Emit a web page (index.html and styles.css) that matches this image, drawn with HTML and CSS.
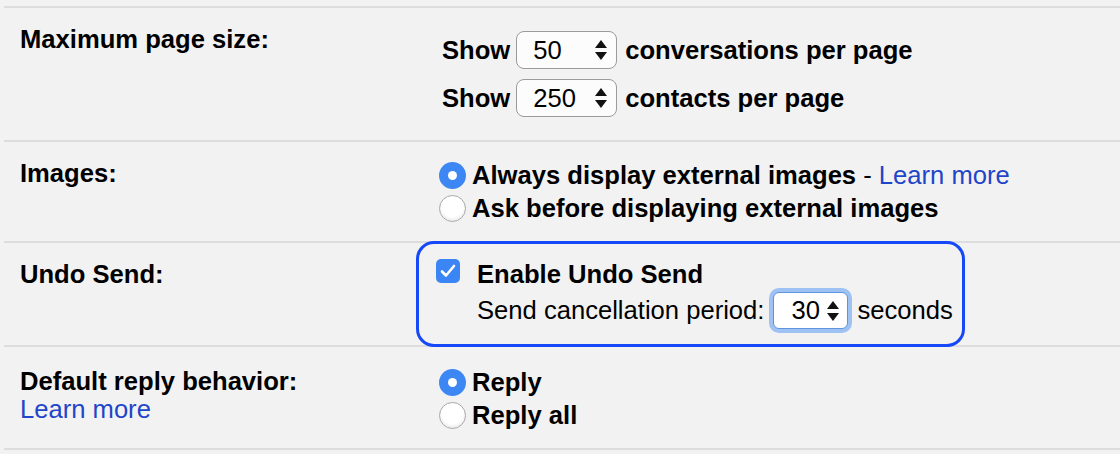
FILE: index.html
```html
<!DOCTYPE html>
<html lang="en">
<head>
    <meta charset="UTF-8">
    <title>Settings</title>
    <link rel="stylesheet" href="styles.css">
</head>
<body>
    <div class="settings">
        <div class="row row-pages">
            <div class="label">Maximum page size:</div>
            <div class="value">
                <div class="line">
                    <span>Show</span>
                    <span class="select"><span>50</span>
                        <svg class="arrows" width="12" height="20" viewBox="0 0 12 20"><path d="M0 8 L6 0 L12 8 Z M0 12 L6 20 L12 12 Z"/></svg>
                    </span>
                    <span>conversations per page</span>
                </div>
                <div class="line">
                    <span>Show</span>
                    <span class="select"><span>250</span>
                        <svg class="arrows" width="12" height="20" viewBox="0 0 12 20"><path d="M0 8 L6 0 L12 8 Z M0 12 L6 20 L12 12 Z"/></svg>
                    </span>
                    <span>contacts per page</span>
                </div>
            </div>
        </div>

        <div class="row row-radios">
            <div class="label">Images:</div>
            <div class="value">
                <div class="option">
                    <span class="radio checked"></span>
                    <span>Always display external images</span><span class="normal">&nbsp;- <a href="#">Learn more</a></span>
                </div>
                <div class="option">
                    <span class="radio"></span>
                    <span>Ask before displaying external images</span>
                </div>
            </div>
        </div>

        <div class="row row-undo">
            <div class="label">Undo Send:</div>
            <div class="value">
                <div class="highlight">
                    <div class="check-line">
                        <span class="checkbox">
                            <svg width="16" height="14" viewBox="0 0 16 14"><path d="M2 7.5 L6 11.5 L14 2" fill="none" stroke="#fff" stroke-width="2.6" stroke-linecap="round" stroke-linejoin="round"/></svg>
                        </span>
                        <span>Enable Undo Send</span>
                    </div>
                    <div class="period-line">
                        <span>Send cancellation period:</span>
                        <span class="select focused"><span>30</span>
                            <svg class="arrows" width="12" height="20" viewBox="0 0 12 20"><path d="M0 8 L6 0 L12 8 Z M0 12 L6 20 L12 12 Z"/></svg>
                        </span>
                        <span>seconds</span>
                    </div>
                </div>
            </div>
        </div>

        <div class="row row-radios row-reply">
            <div class="label">Default reply behavior:<br><a href="#" class="normal">Learn more</a></div>
            <div class="value">
                <div class="option">
                    <span class="radio checked"></span>
                    <span>Reply</span>
                </div>
                <div class="option">
                    <span class="radio"></span>
                    <span>Reply all</span>
                </div>
            </div>
        </div>
    </div>
</body>
</html>
```

FILE: styles.css
```css
* {
    margin: 0;
    padding: 0;
    box-sizing: border-box;
}

body {
    background-color: #f2f2f2;
    font-family: "Liberation Sans", Arial, sans-serif;
    font-size: 25.6px;
    font-weight: bold;
    color: #000;
    overflow: hidden;
}

a {
    color: #1f45c8;
    text-decoration: none;
    font-weight: normal;
}

.normal {
    font-weight: normal;
}

.settings {
    margin: 6px 0 0 4px;
    border-top: 2px solid #dddddd;
}

.row {
    display: grid;
    grid-template-columns: 435px 1fr;
    border-bottom: 2px solid #dddddd;
}

.label {
    padding: 17px 0 0 16px;
    line-height: 28px;
}

/* page size */
.row-pages .value {
    padding: 23px 0;
    display: flex;
    flex-direction: column;
    gap: 10px;
}

.line {
    display: flex;
    align-items: center;
    height: 38px;
    padding-left: 3px;
}

.select {
    display: flex;
    align-items: center;
    justify-content: space-between;
    width: 101px;
    height: 38px;
    margin: 0 8px 0 6px;
    padding: 0 9px 0 16px;
    background: #fcfcfc;
    border: 1.5px solid #9b9b9b;
    border-radius: 8px;
    font-weight: normal;
}

.arrows {
    fill: #111;
}

/* radios */
.row-radios .value {
    padding: 17px 0 16px;
}

.row-reply .label {
    padding-top: 20px;
}

.row-reply .value {
    padding: 19px 0 16px;
}

.option {
    display: flex;
    align-items: center;
    height: 33px;
}

.radio {
    width: 27px;
    height: 27px;
    margin-right: 6px;
    border-radius: 50%;
    background: #fff;
    border: 1px solid #a8a8a8;
    box-shadow: inset 0 -2px 3px rgba(0, 0, 0, 0.08);
    flex-shrink: 0;
}

.radio.checked {
    border: none;
    background: #3c87f4;
    box-shadow: none;
    display: flex;
    align-items: center;
    justify-content: center;
}

.radio.checked::after {
    content: "";
    width: 9px;
    height: 9px;
    border-radius: 50%;
    background: #fff;
}

/* undo send */
.highlight {
    width: 549px;
    height: 106px;
    margin: -2px 0 -2px -23px;
    border: 3px solid #1648f7;
    border-radius: 18px;
    padding: 15px 0 0 17px;
}

.check-line {
    display: flex;
    align-items: center;
    height: 30px;
}

.checkbox {
    display: flex;
    align-items: center;
    justify-content: center;
    width: 24px;
    height: 24px;
    margin: 0 17px 0 0;
    background: #3b86f4;
    border-radius: 5px;
    position: relative;
    top: -3px;
}

.period-line {
    display: flex;
    align-items: center;
    height: 45px;
    margin-top: -1px;
    padding-left: 41px;
    font-weight: normal;
}

.select.focused {
    width: 75px;
    height: 37px;
    margin: 0 9px 0 9px;
    padding: 0 8px 0 17px;
    background: #fff;
    border: 1.5px solid #5f93de;
    border-radius: 6px;
    box-shadow: 0 0 0 4px #9dc2f3;
}
```
